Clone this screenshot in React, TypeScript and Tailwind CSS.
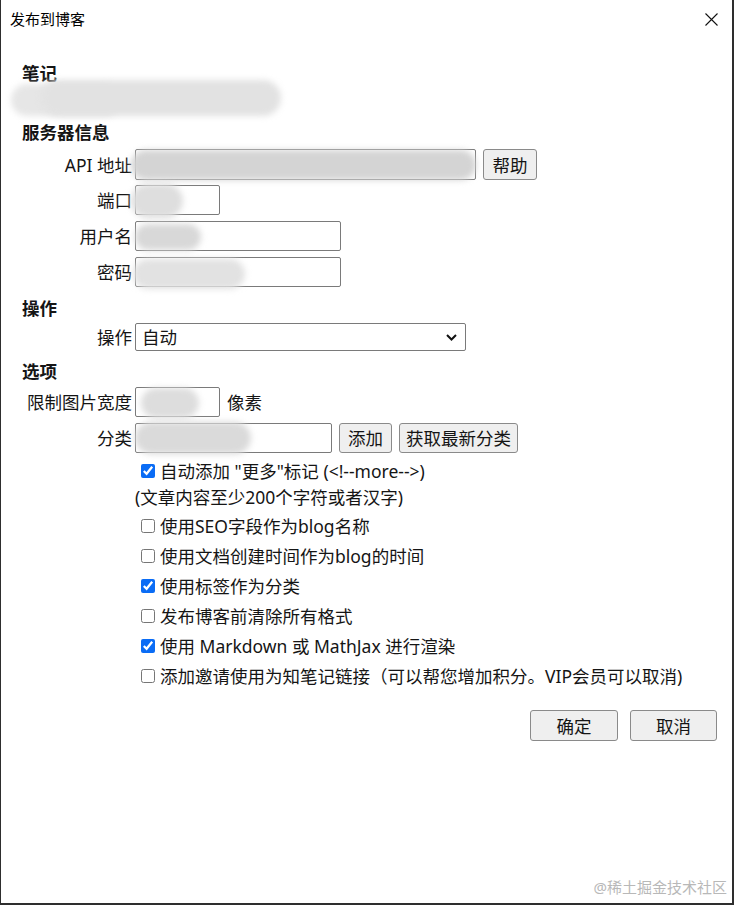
import React from "react";

function Blob({ c }: { c: string }) {
  return <div className={"pointer-events-none absolute rounded-full blur-[3px] " + c} />;
}

function Row({ label, children, h = "h-[30px]", mt = "mt-[6px]" }: { label: string; children: React.ReactNode; h?: string; mt?: string }) {
  return (
    <div className={"flex items-center " + h + " " + mt}>
      <div className="w-[131px] shrink-0 text-right leading-[20px]">{label}</div>
      <div className="ml-[3px] flex h-full items-center gap-[7px]">{children}</div>
    </div>
  );
}

function Input({ w }: { w: string }) {
  return <div className={"h-full rounded-[2px] border border-[#7a7a7a] bg-white " + w} />;
}

function Btn({ children, w }: { children: React.ReactNode; w: string }) {
  return (
    <div className={"flex h-full items-center justify-center rounded-[3px] border border-[#8a8a8a] bg-[#efefef] leading-[20px] " + w}>
      {children}
    </div>
  );
}

function Check({ checked, children }: { checked?: boolean; children: React.ReactNode }) {
  return (
    <div className="flex h-[30px] items-center pl-[140px]">
      <input
        type="checkbox"
        defaultChecked={checked}
        className="m-0 h-[14px] w-[14px] shrink-0 accent-[#0a6cf5]"
      />
      <span className="ml-[5px] leading-[20px]">{children}</span>
    </div>
  );
}

export default function App() {
  return (
    <div className="relative h-[905px] w-[734px] overflow-hidden border-b-2 border-l border-r-2 border-[#2e2e2e] bg-white font-['Noto_Sans','Noto_Sans_CJK_SC',sans-serif] text-[17.5px] text-[#151515]">
      {/* title bar */}
      <div className="flex h-[38px] items-center justify-between pl-[9px] pr-[13px]">
        <span className="text-[15px] leading-[20px] text-black">发布到博客</span>
        <svg width="13" height="13" viewBox="0 0 13 13" className="mr-[1px]">
          <path d="M0.5 0.5 L12.5 12.5 M12.5 0.5 L0.5 12.5" stroke="#111" strokeWidth="1.1" />
        </svg>
      </div>

      <div className="pl-[21px]">
        <div className="mt-[25px] h-[20px] font-bold leading-[20px]">笔记</div>
      </div>
      <div className="h-[39px]" />
      <div className="pl-[21px]">
        <div className="h-[20px] font-bold leading-[20px]">服务器信息</div>
      </div>

      <Row label="API 地址" h="h-[31px]" mt="mt-[7px]">
        <Input w="w-[341px]" />
        <Btn w="w-[54px]">帮助</Btn>
      </Row>
      <Row label="端口" mt="mt-[5px]">
        <Input w="w-[85px]" />
      </Row>
      <Row label="用户名">
        <Input w="w-[206px]" />
      </Row>
      <Row label="密码">
        <Input w="w-[206px]" />
      </Row>

      <div className="pl-[21px]">
        <div className="mt-[11px] h-[20px] font-bold leading-[20px]">操作</div>
      </div>
      <Row label="操作" h="h-[28px]" mt="mt-[5px]">
        <div className="flex h-full w-[331px] items-center justify-between rounded-[2px] border border-[#7a7a7a] bg-white pl-[6px] pr-[8px]">
          <span className="leading-[20px]">自动</span>
          <svg width="11" height="7" viewBox="0 0 11 7">
            <path d="M1 1 L5.5 5.5 L10 1" fill="none" stroke="#111" strokeWidth="2" />
          </svg>
        </div>
      </Row>

      <div className="pl-[21px]">
        <div className="mt-[10px] h-[20px] font-bold leading-[20px]">选项</div>
      </div>
      <Row label="限制图片宽度">
        <Input w="w-[85px]" />
        <span className="leading-[20px]">像素</span>
      </Row>
      <Row label="分类">
        <Input w="w-[197px]" />
        <Btn w="w-[53px]">添加</Btn>
        <Btn w="w-[119px]">获取最新分类</Btn>
      </Row>

      <div className="mt-[3px]">
        <Check checked>自动添加 "更多"标记 (&lt;!--more--&gt;)</Check>
        <div className="-mt-[3px] h-[28px] pl-[134px] leading-[28px]">(文章内容至少200个字符或者汉字)</div>
        <Check>使用SEO字段作为blog名称</Check>
        <Check>使用文档创建时间作为blog的时间</Check>
        <Check checked>使用标签作为分类</Check>
        <Check>发布博客前清除所有格式</Check>
        <Check checked>使用 Markdown 或 MathJax 进行渲染</Check>
        <Check>添加邀请使用为知笔记链接（可以帮您增加积分。VIP会员可以取消)</Check>
      </div>

      <div className="mt-[19px] flex h-[31px] justify-end gap-[12px] pr-[15px]">
        <Btn w="w-[88px]">确定</Btn>
        <Btn w="w-[87px]">取消</Btn>
      </div>

      {/* redaction blobs */}
      <Blob c="left-[10px] top-[84px] h-[32px] w-[110px] bg-[#e6e6e6]" />
      <Blob c="left-[40px] top-[80px] h-[36px] w-[240px] bg-[#e2e2e2]" />
      <Blob c="left-[130px] top-[150px] h-[30px] w-[345px] bg-[#d4d4d4]" />
      <Blob c="left-[130px] top-[184px] h-[34px] w-[52px] bg-[#dedede]" />
      <Blob c="left-[134px] top-[224px] h-[26px] w-[66px] bg-[#d8d8d8]" />
      <Blob c="left-[132px] top-[259px] h-[30px] w-[112px] bg-[#e2e2e2]" />
      <Blob c="left-[140px] top-[388px] h-[30px] w-[58px] bg-[#dddddd]" />
      <Blob c="left-[134px] top-[422px] h-[32px] w-[116px] bg-[#dadada]" />

      <div className="absolute bottom-[7px] right-[5px] text-[15px] leading-[18px] text-[#b8b8b8]">@稀土掘金技术社区</div>
    </div>
  );
}
